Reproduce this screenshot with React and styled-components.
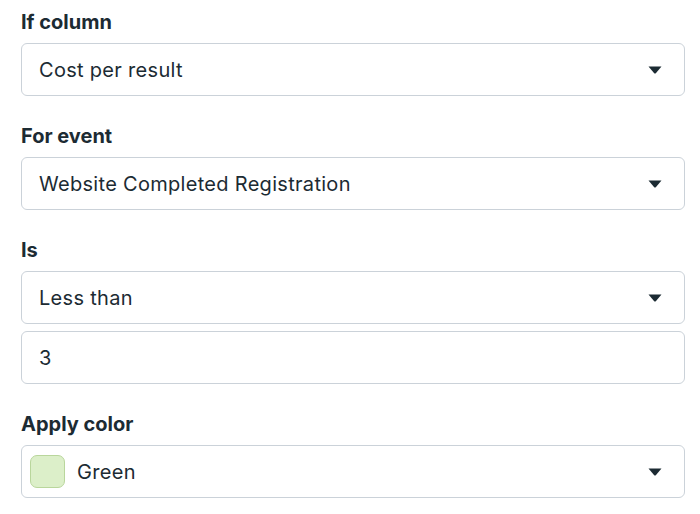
import React from 'react';
import styled, { createGlobalStyle } from 'styled-components';

const GlobalStyle = createGlobalStyle`
  body {
    margin: 0;
    background: #ffffff;
    font-family: Inter, "Open Sans", sans-serif;
    color: #1c2b33;
  }
`;

const Panel = styled.div`
  width: 700px;
  height: 514px;
  box-sizing: border-box;
  padding: 10px 15px 0 21px;
  display: flex;
  flex-direction: column;
  gap: 28px;
`;

const Field = styled.div`
  display: flex;
  flex-direction: column;
  gap: 7px;
`;

const Label = styled.div`
  font-size: 20px;
  font-weight: 700;
  line-height: 24px;
  margin-bottom: 2px;
  letter-spacing: 0;
`;

const Box = styled.div`
  height: 53px;
  box-sizing: border-box;
  border: 1px solid #cbd2d9;
  border-radius: 6px;
  display: flex;
  align-items: center;
  padding: 0 22px 0 ${p => (p.$swatch ? '8px' : '17px')};
  font-size: 20px;
  letter-spacing: 0.3px;
  line-height: 24px;
  background: #fff;
`;

const Value = styled.span`
  flex: 1;
`;

const Swatch = styled.span`
  width: 35px;
  height: 33px;
  box-sizing: border-box;
  border-radius: 7px;
  background: #dcefc9;
  border: 1px solid #b9d69c;
  margin-right: 12px;
`;

const Caret = styled.svg`
  width: 14px;
  height: 8px;
  fill: #1c2b33;
`;

const Arrow = () => (
  <Caret viewBox="0 0 14 8">
    <path d="M0.5 0.5 H13.5 L7.8 7.2 Q7 8 6.2 7.2 Z" />
  </Caret>
);

const Select = ({ children, swatch }) => (
  <Box $swatch={swatch}>
    {swatch && <Swatch />}
    <Value>{children}</Value>
    <Arrow />
  </Box>
);

export default function App() {
  return (
    <>
      <GlobalStyle />
      <Panel>
        <Field>
          <Label>If column</Label>
          <Select>Cost per result</Select>
        </Field>
        <Field>
          <Label>For event</Label>
          <Select>Website Completed Registration</Select>
        </Field>
        <Field>
          <Label>Is</Label>
          <Select>Less than</Select>
          <Box>3</Box>
        </Field>
        <Field>
          <Label>Apply color</Label>
          <Select swatch>Green</Select>
        </Field>
      </Panel>
    </>
  );
}
